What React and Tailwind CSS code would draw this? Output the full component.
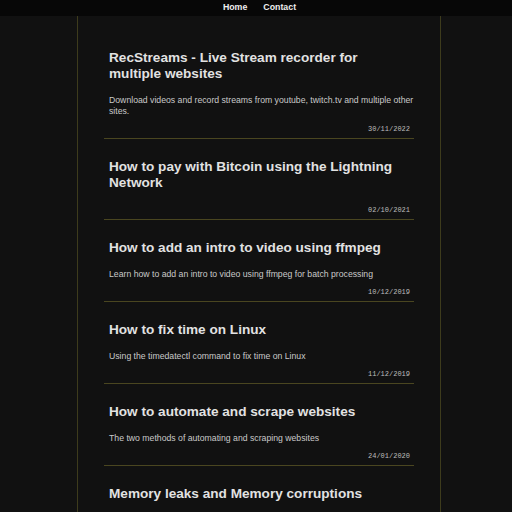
const posts = [
  {
    title: 'RecStreams - Live Stream recorder for multiple websites',
    desc: 'Download videos and record streams from youtube, twitch.tv and multiple other sites.',
    date: '30/11/2022',
  },
  {
    title: 'How to pay with Bitcoin using the Lightning Network',
    desc: '',
    date: '02/10/2021',
  },
  {
    title: 'How to add an intro to video using ffmpeg',
    desc: 'Learn how to add an intro to video using ffmpeg for batch processing',
    date: '10/12/2019',
  },
  {
    title: 'How to fix time on Linux',
    desc: 'Using the timedatectl command to fix time on Linux',
    date: '11/12/2019',
  },
  {
    title: 'How to automate and scrape websites',
    desc: 'The two methods of automating and scraping websites',
    date: '24/01/2020',
  },
  {
    title: 'Memory leaks and Memory corruptions',
  },
]

const Post = ({ title, desc, date }) => (
  <article className="border-b border-[#4a4620] pt-[20px] pb-[4px] pl-[5px]">
    <h2 className={`text-[13.6px] leading-[16px] font-bold text-[#e2e2e2] pr-[4px] ${desc ? 'mb-[13px]' : 'mb-[15px]'}`}>
      {title}
    </h2>
    {desc && <p className="text-[8.7px] leading-[11px] text-[#c9c9c9] mb-[8px] -mr-[6px]">{desc}</p>}
    {date && (
      <div className="text-right pr-[4px] text-[7px] leading-[9px] text-[#bdbdbd] font-['Liberation_Mono',monospace]">
        {date}
      </div>
    )}
  </article>
)

export default function App() {
  return (
    <div className="h-screen overflow-hidden bg-[#111111] font-['Liberation_Sans',Arial,sans-serif]">
      <nav className="h-4 bg-[#070707] flex justify-center items-center gap-[16px] pl-[7px] text-[8.8px] font-bold text-[#eeeeee]">
        <a>Home</a>
        <a>Contact</a>
      </nav>
      <main className="ml-[77px] w-[364px] min-h-[496px] border-x border-[#3d3b1c] pt-[14px] px-[26px]">
        {posts.map((p) => (
          <Post key={p.title} {...p} />
        ))}
      </main>
    </div>
  )
}
